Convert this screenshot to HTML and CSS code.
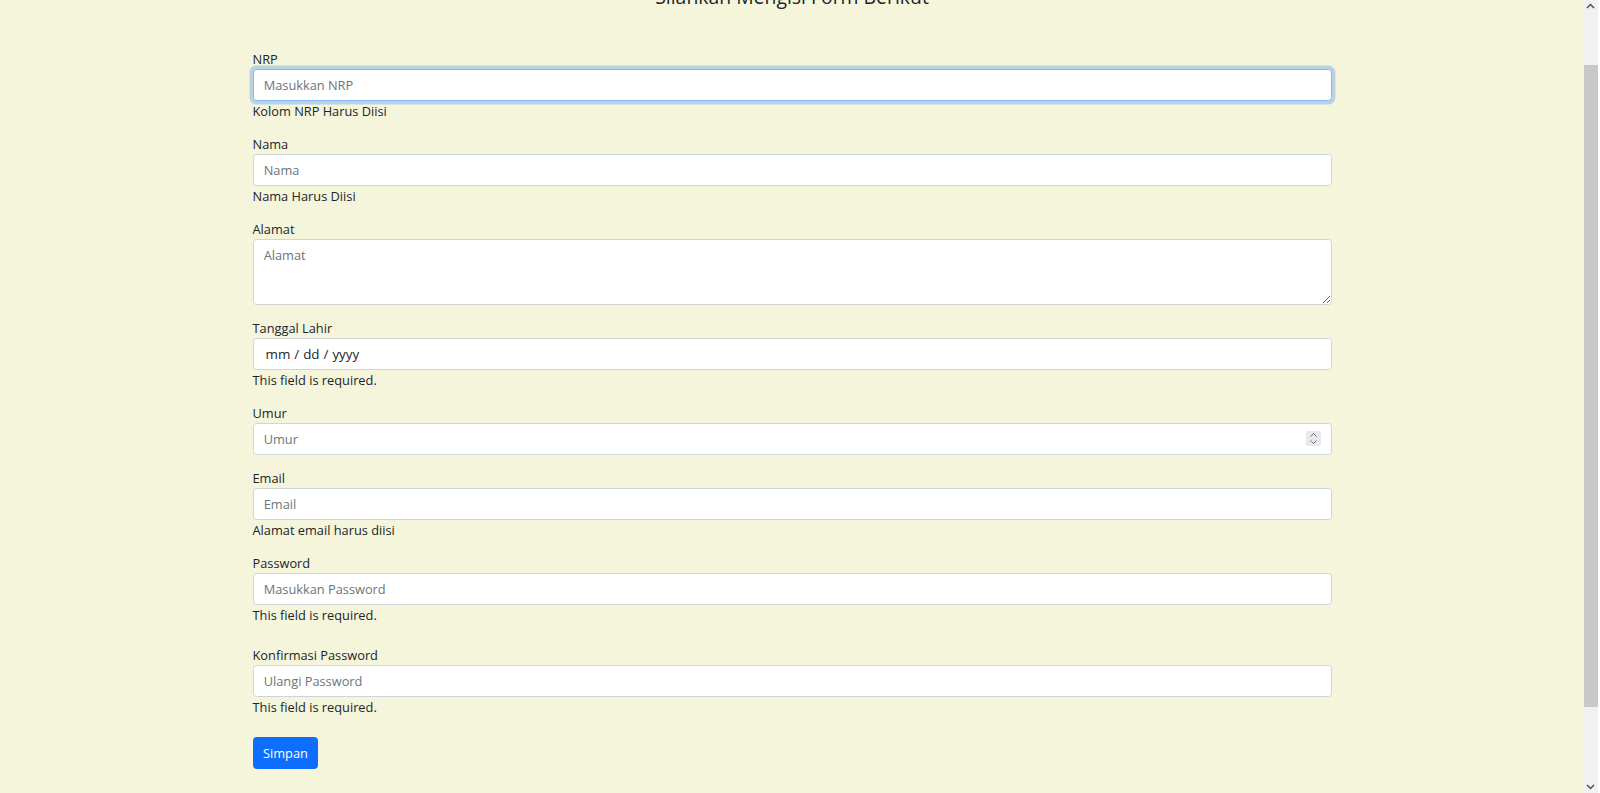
FILE: index.html
```html
<!DOCTYPE html>
<html lang="id">
<head>
    <meta charset="UTF-8">
    <meta name="viewport" content="width=device-width, initial-scale=1.0">
    <title>Form Data Mahasiswa</title>
    <link rel="stylesheet" href="styles.css">
</head>
<body>
<div class="container">
    <h4 class="judul">Silahkan Mengisi Form Berikut</h4>
    <form id="formMahasiswa" novalidate>
        <div class="mb-3">
            <label for="nrp">NRP</label>
            <input type="text" class="form-control focused" id="nrp" name="nrp" placeholder="Masukkan NRP">
            <div class="pesan">Kolom NRP Harus Diisi</div>
        </div>

        <div class="mb-3">
            <label for="nama">Nama</label>
            <input type="text" class="form-control" id="nama" name="nama" placeholder="Nama">
            <div class="pesan">Nama Harus Diisi</div>
        </div>

        <div class="mb-3">
            <label for="alamat">Alamat</label>
            <textarea class="form-control alamat" id="alamat" name="alamat" placeholder="Alamat"></textarea>
        </div>

        <div class="mb-3">
            <label for="tglLahir">Tanggal Lahir</label>
            <input type="text" class="form-control tanggal" id="tglLahir" name="tglLahir" placeholder="mm / dd / yyyy" onfocus="this.type='date'">
            <div class="pesan">This field is required.</div>
        </div>

        <div class="mb-3">
            <label for="umur">Umur</label>
            <div class="input-angka">
                <input type="number" class="form-control" id="umur" name="umur" placeholder="Umur">
                <span class="spin">
                    <svg width="15" height="15" viewBox="0 0 15 15">
                        <polyline points="4.5,5.5 7.5,2.5 10.5,5.5" fill="none" stroke="#6e6e6e" stroke-width="1"/>
                        <polyline points="4.5,9.5 7.5,12.5 10.5,9.5" fill="none" stroke="#6e6e6e" stroke-width="1"/>
                    </svg>
                </span>
            </div>
        </div>

        <div class="mb-3">
            <label for="email">Email</label>
            <input type="email" class="form-control" id="email" name="email" placeholder="Email">
            <div class="pesan">Alamat email harus diisi</div>
        </div>

        <div class="mb-3">
            <label for="password">Password</label>
            <input type="password" class="form-control" id="password" name="password" placeholder="Masukkan Password">
            <div class="pesan">This field is required.</div>
        </div>

        <div class="mb-3 konfirmasi">
            <label for="konfirmasi">Konfirmasi Password</label>
            <input type="password" class="form-control" id="konfirmasi" name="konfirmasi" placeholder="Ulangi Password">
            <div class="pesan">This field is required.</div>
        </div>

        <button type="submit" class="btn-simpan">Simpan</button>
    </form>
</div>

<div class="scrollbar">
    <svg class="panah atas" width="16" height="12" viewBox="0 0 16 12">
        <polyline points="4,8 7.5,4.5 11,8" fill="none" stroke="#505050" stroke-width="1.5"/>
    </svg>
    <div class="thumb"></div>
    <svg class="panah bawah" width="16" height="12" viewBox="0 0 16 12">
        <polyline points="4,4 7.5,7.5 11,4" fill="none" stroke="#505050" stroke-width="1.5"/>
    </svg>
</div>
<script src="script.js"></script>
</body>
</html>
```

FILE: styles.css
```css
html, body {
    margin: 0;
    padding: 0;
}

body {
    font-family: "Segoe UI", "Open Sans", Arial, sans-serif;
    font-size: 12.8px;
    line-height: 20px;
    color: #212529;
    background-color: #f5f5dc;
    padding-right: 16px;
}

.container {
    max-width: 1079px;
    margin: 0 auto;
    padding: 44px 0 111px;
}

.judul {
    margin: 0 0 41px;
    font-size: 19.4px;
    font-weight: 500;
    line-height: 1.2;
    text-align: center;
}

.mb-3 {
    margin-bottom: 13px;
}

.konfirmasi {
    margin-top: 20px;
}

label {
    display: inline-block;
}

.form-control {
    display: block;
    box-sizing: border-box;
    width: 100%;
    height: 32px;
    padding: 4px 10.2px;
    font-family: inherit;
    font-size: 12.8px;
    line-height: 20px;
    color: #212529;
    background-color: #fff;
    border: 1px solid #ced4da;
    border-radius: 3.4px;
    outline: none;
}

.form-control::placeholder {
    color: #6c757d;
}

.form-control.focused {
    border-color: #86b7fe;
    box-shadow: 0 0 0 3.4px rgba(13, 110, 253, 0.25);
}

textarea.alamat {
    height: 66px;
    padding-top: 5px;
    resize: vertical;
}

.tanggal {
    padding-left: 12px;
    font-size: 13.4px;
}

.tanggal::placeholder {
    color: #212529;
    word-spacing: 0.5px;
}

.input-angka {
    position: relative;
}

input[type="number"] {
    -moz-appearance: textfield;
}

input[type="number"]::-webkit-inner-spin-button,
input[type="number"]::-webkit-outer-spin-button {
    -webkit-appearance: none;
    margin: 0;
}

.spin {
    position: absolute;
    top: 8px;
    right: 11px;
    width: 15px;
    height: 15px;
    background-color: #e9e9ed;
    border-radius: 1px;
}

.spin svg {
    display: block;
}

.pesan {
    color: #212529;
}

.btn-simpan {
    margin-top: 7px;
    padding: 5px 9.5px;
    font-family: inherit;
    font-size: 12.8px;
    line-height: 20px;
    color: #fff;
    background-color: #0d6efd;
    border: 1px solid #0d6efd;
    border-radius: 3.4px;
    cursor: pointer;
}

.btn-simpan:hover {
    background-color: #0b5ed7;
}

/* scrollbar jendela browser */
.scrollbar {
    position: fixed;
    top: 0;
    right: 0;
    bottom: 0;
    width: 14px;
    background-color: #f1f1f1;
    border-right: 2px solid #fff;
}

.scrollbar .thumb {
    position: absolute;
    top: 65px;
    left: 0;
    right: 0;
    height: 642px;
    background-color: #c8c8c8;
}

.panah {
    position: absolute;
    left: -1px;
}

.panah.atas {
    top: 0;
}

.panah.bawah {
    bottom: 0;
}
```

FILE: script.js
```js
// posisi gulir halaman seperti saat form sedang diisi
window.scrollTo(0, 59);
window.addEventListener('load', () => {
    window.scrollTo(0, 59);
});
```
